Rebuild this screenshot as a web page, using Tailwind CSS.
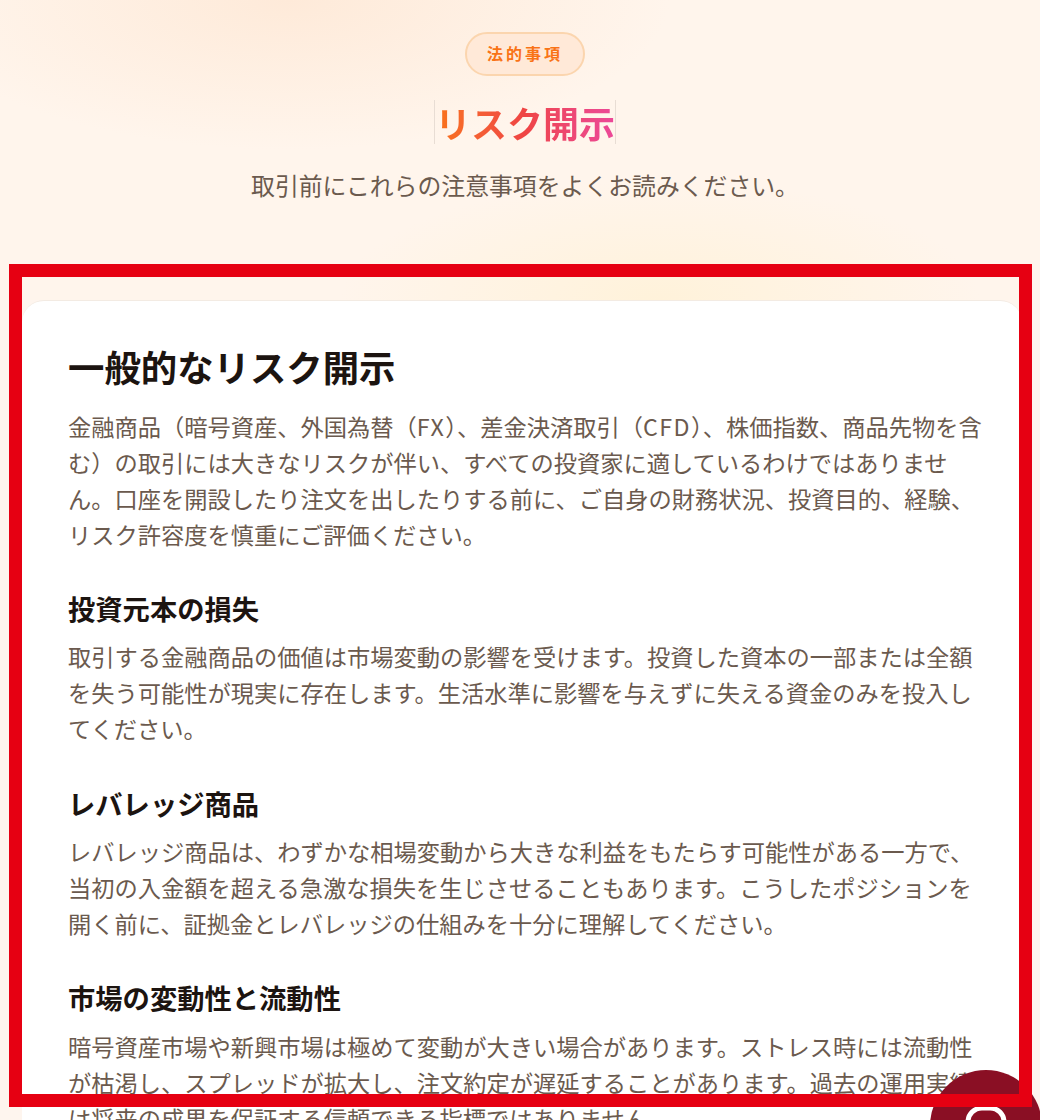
<!DOCTYPE html>
<html lang="ja">
<head>
    <meta charset="UTF-8">
    <title>リスク開示</title>
    <script src="https://cdn.jsdelivr.net/npm/@tailwindcss/browser@4"></script>
</head>
<body class="relative h-[1120px] w-[1040px] overflow-hidden bg-[#fef5ee] font-['Noto_Sans_CJK_JP','Noto_Sans',sans-serif]">

    <!-- hero -->
    <section class="flex h-[300px] flex-col items-center bg-[radial-gradient(ellipse_380px_150px_at_290px_0px,#feead9,transparent),radial-gradient(ellipse_320px_120px_at_660px_300px,#fff2da,transparent),linear-gradient(#fff5ec,#fff5ec)]">
        <span class="mt-[32px] ml-[10px] flex h-[44px] w-[120px] items-center justify-center rounded-full border-2 border-[#fbd5ae] bg-[#ffe9d8] pb-[2px] text-[16px] font-bold tracking-[3px] text-[#f97316]">法的事項</span>
        <h1 class="mt-[24px] ml-[10px] border-x border-[#e8ddd4] bg-gradient-to-r from-[#f97316] via-[#ef4444] to-[#ec4899] bg-clip-text text-[36px] leading-[44px] font-bold text-transparent">リスク開示</h1>
        <p class="mt-[25px] ml-[10px] text-[23.85px] leading-[32px] text-[#6b5a4e]">取引前にこれらの注意事項をよくお読みください。</p>
    </section>

    <!-- card -->
    <main class="ml-[22px] h-[840px] w-[1000px] rounded-t-[22px] border-t border-[#f3ebe3] bg-white px-[46px] pt-[41px] text-[#6b5a4e]">
        <h2 class="text-[36.4px] leading-[48px] font-bold text-[#1c1410]">一般的なリスク開示</h2>
        <p class="mt-[18px] w-[916px] text-[23.25px] leading-[36px]">金融商品（暗号資産、外国為替（<span class="tracking-[1.5px]">FX</span>）、差金決済取引（<span class="tracking-[1.5px]">CFD</span>）、株価指数、商品先物を含む）の取引には大きなリスクが伴い、すべての投資家に適しているわけではありません。口座を開設したり注文を出したりする前に、ご自身の財務状況、投資目的、経験、リスク許容度を慎重にご評価ください。</p>

        <h3 class="mt-[38px] text-[27.3px] leading-[36px] font-bold text-[#1c1410]">投資元本の損失</h3>
        <p class="mt-[12px] w-[916px] text-[23.25px] leading-[36px]">取引する金融商品の価値は市場変動の影響を受けます。投資した資本の一部または全額を失う可能性が現実に存在します。生活水準に影響を与えずに失える資金のみを投入してください。</p>

        <h3 class="mt-[39px] text-[27.3px] leading-[36px] font-bold text-[#1c1410]">レバレッジ商品</h3>
        <p class="mt-[12px] w-[916px] text-[23.25px] leading-[36px]">レバレッジ商品は、わずかな相場変動から大きな利益をもたらす可能性がある一方で、当初の入金額を超える急激な損失を生じさせることもあります。こうしたポジションを開く前に、証拠金とレバレッジの仕組みを十分に理解してください。</p>

        <h3 class="mt-[38px] text-[27.3px] leading-[36px] font-bold text-[#1c1410]">市場の変動性と流動性</h3>
        <p class="mt-[13px] w-[916px] text-[23.25px] leading-[36px]">暗号資産市場や新興市場は極めて変動が大きい場合があります。ストレス時には流動性が枯渇し、スプレッドが拡大し、注文約定が遅延することがあります。過去の運用実績は将来の成果を保証する信頼できる指標ではありません。</p>
    </main>

    <!-- chat button -->
    <button class="absolute top-[1070px] left-[930px] flex h-[112px] w-[112px] justify-center rounded-full bg-[#8a0f24] pt-[35px]">
        <svg class="h-[52px] w-[52px]" viewBox="0 0 52 52" fill="none" stroke="white" stroke-width="5">
            <rect x="8" y="3" width="36" height="40" rx="14"></rect>
        </svg>
    </button>

    <!-- highlight frame -->
    <div class="pointer-events-none absolute top-[264px] left-[9px] h-[843px] w-[1023px] border-[13px] border-[#e60012]"></div>
</body>
</html>
